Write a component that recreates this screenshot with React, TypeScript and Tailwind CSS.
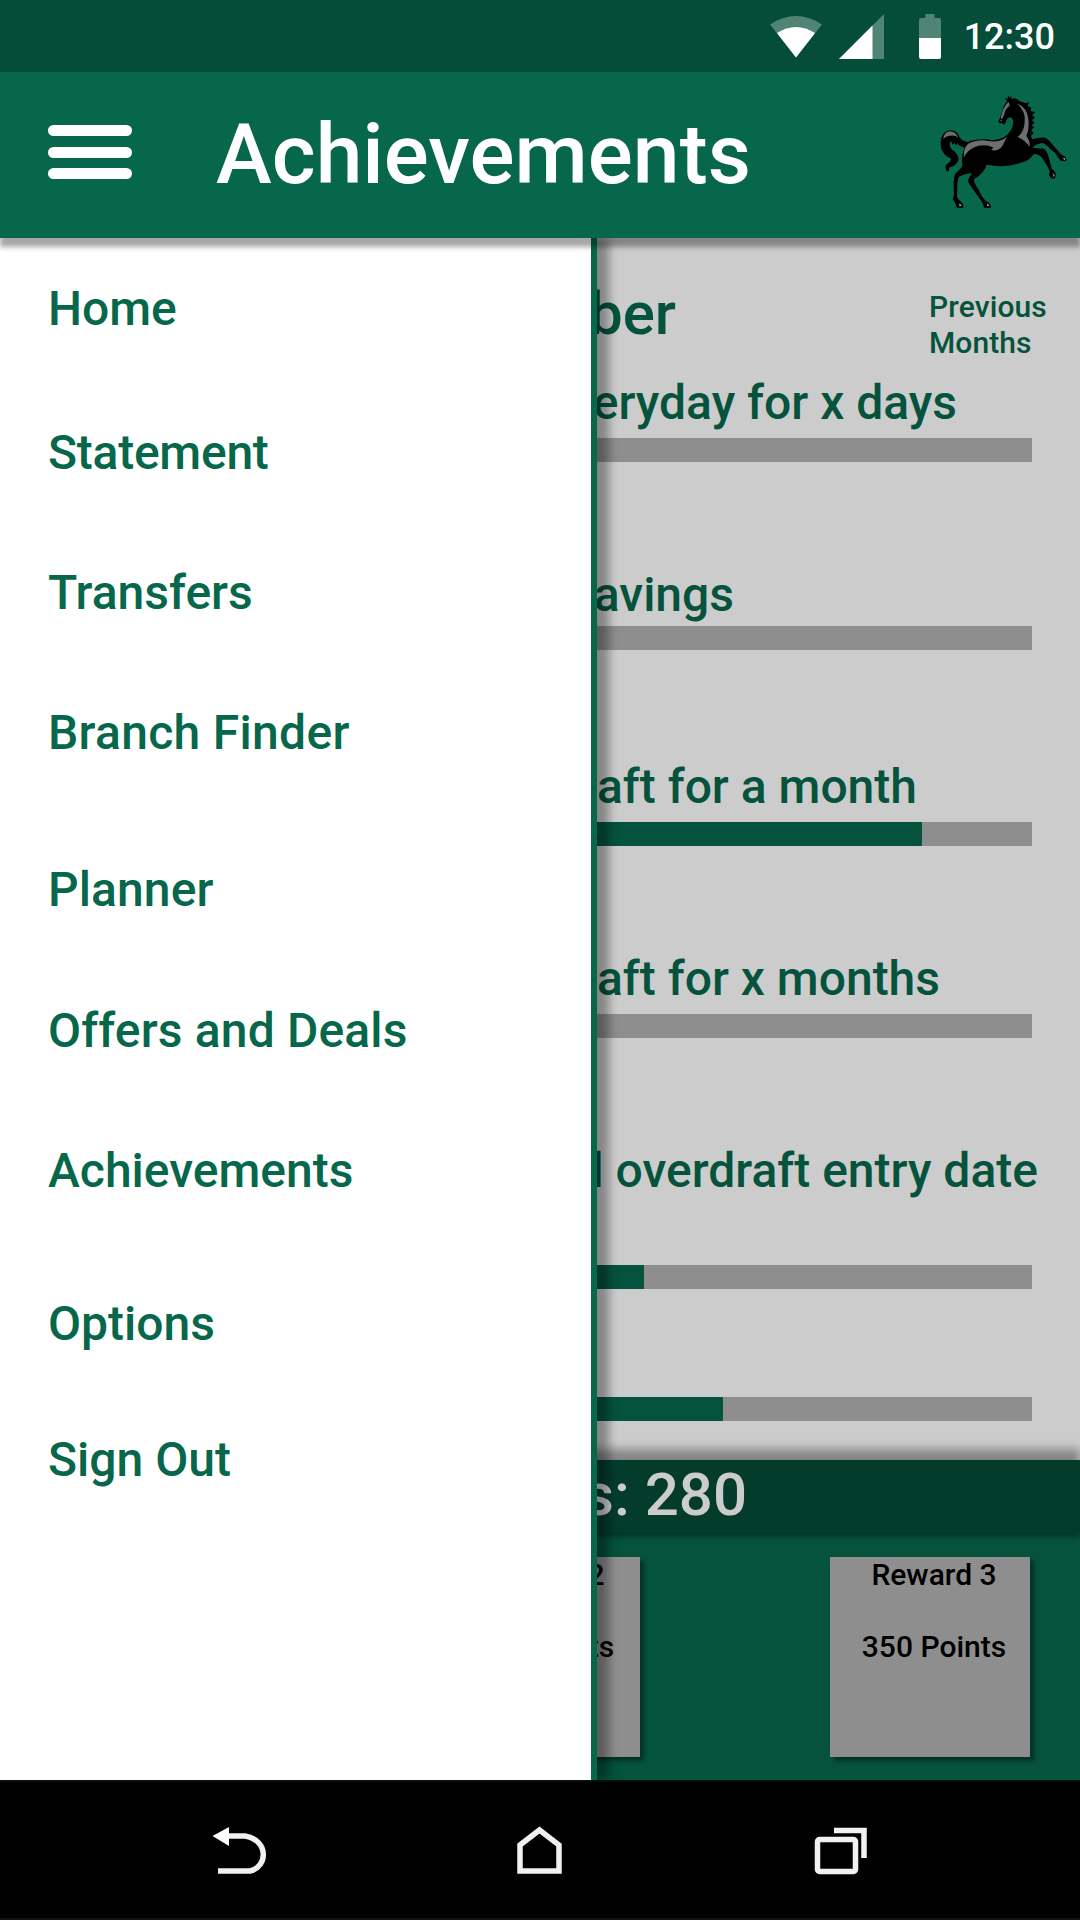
import React from "react";

const menu = [
  { label: "Home", place: "mt-[43px]" },
  { label: "Statement", place: "mt-[88px] tracking-[-0.25px]" },
  { label: "Transfers", place: "mt-[84px]" },
  { label: "Branch Finder", place: "mt-[84px] tracking-[0.3px]" },
  { label: "Planner", place: "mt-[101px] tracking-[0.1px]" },
  { label: "Offers and Deals", place: "mt-[85px] tracking-[0.15px]" },
  { label: "Achievements", place: "mt-[84px]" },
  { label: "Options", place: "mt-[97px]" },
  { label: "Sign Out", place: "mt-[80px]" },
];

const goals = [
  { text: "eryday for x days", row: "h-[63px] pr-[123px]", fill: 0, after: "mb-[105px]" },
  { text: "avings", row: "h-[59px] pr-[346px]", fill: 0, after: "mb-[109px]" },
  { text: "aft for a month", row: "h-[63px] pr-[163px]", fill: 922, after: "mb-[105px]" },
  { text: "aft for x months", row: "h-[63px] pr-[140px]", fill: 0, after: "mb-[105px]" },
  { text: "l overdraft entry date", row: "h-[122px] pr-[42px]", fill: 644, after: "mb-[108px]" },
  { text: "", row: "hidden", fill: 723, after: "" },
];

function StatusBar() {
  return (
    <div className="flex h-[72px] shrink-0 items-start justify-end bg-[#054c39] pr-[25px] text-white">
      <svg className="mt-[14px] h-[46px] w-[150px]" viewBox="0 0 150 46">
        <path d="M0 10.5Q26-6.500 52 10.500L26 43.500Z" fill="#508475" />
        <path d="M7 19Q26 7 45 19L26 43.500Z" fill="#fff" />
        <path d="M114 0V45H69Z" fill="#508475" />
        <path d="M102.500 11.500V45H69Z" fill="#fff" />
      </svg>
      <svg className="mt-[14px] ml-[-1px] h-[46px] w-[22px]" viewBox="0 0 22 46">
        <path d="M0 6Q0 4 2 4H6.500V0H15.500V4H20Q22 4 22 6V24H0Z" fill="#508475" />
        <path d="M0 24H22V43Q22 45 20 45H2Q0 45 0 43Z" fill="#fff" />
      </svg>
      <span className="mt-[16px] ml-[23px] text-[36px] leading-[42px]">12:30</span>
    </div>
  );
}

function Horse() {
  return (
    <svg className="h-[120px] w-[134px]" viewBox="55 40 402 360">
      <path
        fill="#000"
        d="M265 46L269 54L274 50L276 57L288 56L300 65L320 71L328 66L324 79L335 84L333 94L347 98L337 107L346 114L337 121L345 130L336 136L343 143L335 151L342 161L334 168L337 179Q355 173 377 174Q385 178 397 193L424 224Q437 229 441 240L437 245L424 244L416 234Q407 217 391 207Q378 193 369 190Q352 191 338 204Q359 207 370 206Q381 211 386 229L397 269Q408 275 409 286L405 297L393 295L388 287L390 274Q382 256 371 240Q362 223 342 223Q330 244 301 250Q258 266 201 255Q196 277 163 299Q163 313 176 328Q184 350 199 365Q214 370 214 384H193Q191 370 177 353L151 316Q142 305 148 295L157 280Q134 282 118 291Q113 302 113 322L112 353Q124 368 130 372L131 384H111Q109 369 99 359L103 345Q101 318 103 299Q104 281 112 277Q132 261 127 249Q125 228 134 204L117 197L113 191L109 198L104 190L98 195L94 183L90 192Q91 207 104 215Q122 233 114 246Q104 262 91 262Q86 266 89 272L83 276Q72 264 81 254Q97 244 93 236Q73 228 65 207Q59 181 69 165Q79 152 96 152Q112 154 118 170Q126 185 144 187Q165 178 199 179Q231 186 252 173Q278 157 281 129Q280 114 270 113Q258 118 259 129L251 135L248 131L239 131L236 124L241 116Q244 101 249 90Q253 73 263 65L255 54L264 58Z"
      />
      <g fill="#6d6e70">
        <path d="M71 178Q73 157 91 155Q107 155 116 174Q106 165 91 168Q78 169 71 178Z" />
        <path d="M132 233Q130 194 157 187Q181 179 205 184Q240 190 262 171L248 199Q237 215 218 212Q211 211 222 204Q202 194 177 198Q149 204 132 233Z" />
        <path d="M291 71Q323 84 326 117Q330 144 320 169Q331 181 330 202Q316 181 294 172Q313 158 315 128Q319 94 291 71Z" />
        <path d="M265 68Q271 69 269 79Q257 86 254 104L247 119L243 114Q249 85 265 68Z" />
      </g>
      <g fill="#a5a5a7">
        <path d="M429 235L437 236L435 242Z" />
        <path d="M399 281L405 287L402 293Z" />
        <path d="M119 371L127 379L119 379Z" />
        <path d="M202 371L210 379L203 379Z" />
        <path d="M242 120L246 121L244 126Z" />
      </g>
    </svg>
  );
}

function Header() {
  return (
    <header className="relative z-20 flex h-[166px] shrink-0 bg-[#07674b] shadow-[0_9px_5px_0_rgba(0,0,0,0.35)]">
      <div className="mt-[53px] ml-[48px] flex h-[54px] w-[84px] flex-col justify-between">
        <i className="h-[11px] rounded-full bg-white" />
        <i className="h-[11px] rounded-full bg-white" />
        <i className="h-[11px] rounded-full bg-white" />
      </div>
      <h1 className="mt-[33px] ml-[84px] text-[84px] leading-[100px] tracking-[0.05px] text-white">Achievements</h1>
      <div className="mt-[21px] mr-[8px] ml-auto">
        <Horse />
      </div>
    </header>
  );
}

function Drawer() {
  return (
    <nav className="absolute inset-y-0 left-0 z-10 w-[597px] border-r-[6px] border-[#07674b] bg-white pl-[48px] text-[48px] leading-[56px] text-[#07674b] shadow-[12px_0_9px_0_rgba(0,0,0,0.35)]">
      {menu.map((m) => (
        <div key={m.label} className={m.place}>
          {m.label}
        </div>
      ))}
    </nav>
  );
}

function Goals() {
  return (
    <section className="h-[1222px] text-[#05533c]">
      <div className="flex h-[137px] items-start justify-between">
        <div className="mt-[41px] w-[676px] text-right text-[60px] leading-[70px]">ber</div>
        <div className="mt-[51px] w-[151px] text-[30px] leading-[36px] tracking-[0.1px]">Previous Months</div>
      </div>
      {goals.map((g, i) => (
        <div key={i} className={g.after}>
          <div className={`text-right text-[48px] leading-[56px] whitespace-nowrap ${g.row}`}>{g.text}</div>
          <div className="mr-[48px] h-[24px] bg-[#8e8e8e]">
            <div className="h-full bg-[#05533c]" style={{ width: g.fill }} />
          </div>
        </div>
      ))}
    </section>
  );
}

function Reward({ name, points, inset }: { name: string; points: string; inset: string }) {
  return (
    <div
      className={`h-[200px] w-[200px] bg-[#8e8e8e] text-center text-[30px] leading-[36px] text-black shadow-[4px_4px_4px_rgba(0,0,0,0.4)] ${inset}`}
    >
      <div>{name}</div>
      <div className="mt-[36px]">{points}</div>
    </div>
  );
}

export default function App() {
  return (
    <div className="flex h-[1920px] w-[1080px] flex-col overflow-hidden bg-black font-['Roboto',sans-serif] font-medium">
      <StatusBar />
      <Header />
      <main className="relative h-[1542px] shrink-0 overflow-hidden bg-[#ccc]">
        <Goals />
        <div className="relative h-[73px] bg-[#043c2c] shadow-[0_4px_5px_0_rgba(0,0,0,0.35),0_-11px_9px_0_rgba(0,0,0,0.35)]">
          <div className="w-[747px] text-right text-[60px] leading-[70px] text-[#ccc]">s: 280</div>
        </div>
        <div className="flex h-[247px] justify-end gap-[190px] bg-[#05533c] pt-[24px] pr-[50px]">
          <Reward name="Reward 2" points="200 Points" inset="pl-[4px]" />
          <Reward name="Reward 3" points="350 Points" inset="pl-[8px]" />
        </div>
        <Drawer />
      </main>
      <footer className="flex h-[140px] shrink-0 items-start border-t-2 border-b-2 border-t-[#020f0b] border-b-[#111] pl-[212px]">
        <svg className="mt-[44px] h-[52px] w-[56px]" viewBox="0 0 56 52" fill="none" stroke="#f1f1f1" strokeWidth="5.500">
          <path d="M14 10H33C57 14 56 41 38 45H6" />
          <path d="M0.500 10L17 1V20Z" fill="#fff" stroke="none" />
        </svg>
        <svg className="mt-[44px] ml-[246px] h-[52px] w-[52px]" viewBox="0 0 52 52" fill="none" stroke="#f1f1f1" strokeWidth="5.500">
          <path d="M6 19L25.500 4L45 19V45H6Z" />
        </svg>
        <svg className="mt-[44px] ml-[248px] h-[52px] w-[54px]" viewBox="0 0 54 52" fill="none" stroke="#f1f1f1" strokeWidth="5.500">
          <rect x="3.500" y="13.500" width="38" height="32" rx="2" />
          <path d="M20 4.500H50V32" />
        </svg>
      </footer>
    </div>
  );
}
